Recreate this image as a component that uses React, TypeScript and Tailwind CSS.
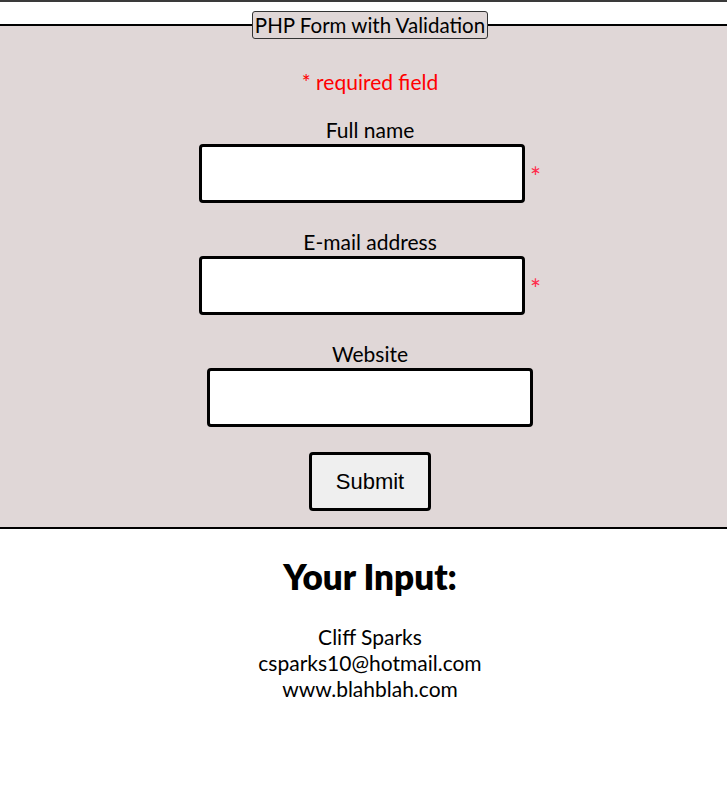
import React from "react";

const font = { fontFamily: '"Gill Sans", "Lato", "Noto Sans", sans-serif' };

function Field({ label, required }: { label: string; required?: boolean }) {
  return (
    <div className="flex flex-col items-center">
      <div className="text-[21px] leading-[24px] text-black">{label}</div>
      <div className="mt-[2px] flex items-center">
        <input type="text" className="h-[59px] w-[326px] rounded-[4px] border-[3px] border-black bg-white" />
        {required ? (
          <span className="ml-[5px] mt-[6px] w-[11px] text-[26px] leading-none text-[#ff2a4a]">*</span>
        ) : null}
      </div>
    </div>
  );
}

export default function App() {
  return (
    <div className="min-h-[812px] bg-white" style={font}>
      <div className="h-[2px] bg-[#3a3a3a]" />
      <fieldset className="mt-[9px] border-x-0 border-y-2 border-black bg-[#e0d7d7] pb-[16px] pl-[13px]">
        <legend className="mx-auto rounded-[3px] border border-[#333] bg-[#e0d7d7] px-[2px] text-[20.5px] leading-[26px] text-black">
          PHP Form with Validation
        </legend>
        <div className="flex flex-col items-center">
          <div className="mt-[31px] text-[21px] leading-[24px] text-[#ff0000]">* required field</div>
          <div className="mt-[24px]">
            <Field label="Full name" required />
          </div>
          <div className="mt-[27px]">
            <Field label="E-mail address" required />
          </div>
          <div className="mt-[27px]">
            <Field label="Website" />
          </div>
          <button
            className="mt-[25px] h-[59px] w-[122px] rounded-[4px] border-[3px] border-black bg-[#efefef] text-[22px] text-black"
            style={{ fontFamily: '"Liberation Sans", Arial, sans-serif' }}
          >
            Submit
          </button>
        </div>
      </fieldset>
      <div className="flex flex-col items-center pl-[13px]">
        <h2 className="mt-[27px] text-[35px] font-extrabold leading-[40px] text-black">Your Input:</h2>
        <div className="mt-[28px] text-center text-[21px] leading-[26px] text-black">
          <div>Cliff Sparks</div>
          <div>csparks10@hotmail.com</div>
          <div>www.blahblah.com</div>
        </div>
      </div>
    </div>
  );
}
